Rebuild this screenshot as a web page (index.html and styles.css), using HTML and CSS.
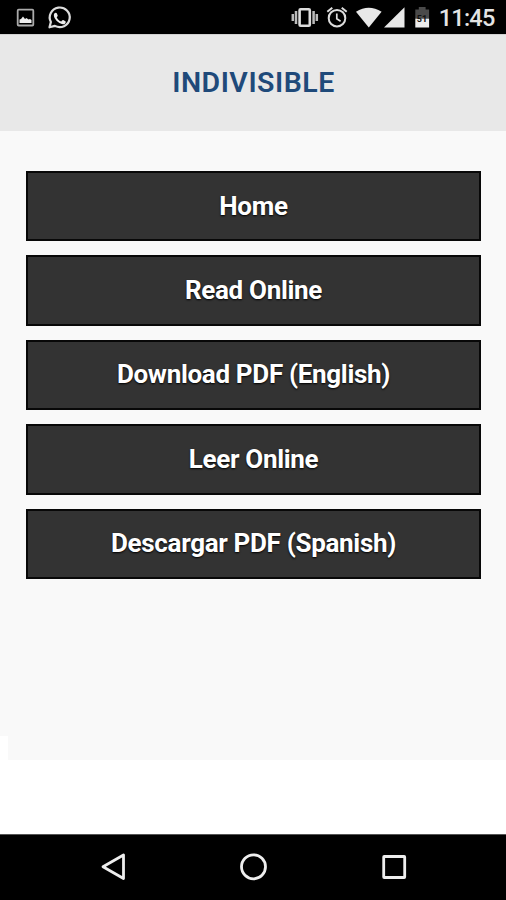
FILE: index.html
```html
<!DOCTYPE html>
<html lang="en">
<head>
  <meta charset="UTF-8" />
  <meta name="viewport" content="width=device-width, initial-scale=1" />
  <title>Indivisible</title>
  <link rel="stylesheet" href="styles.css">
</head>
<body>
  <!-- Status Bar -->
  <div class="status-bar">
    <svg width="506" height="34" viewBox="0 0 506 34">
      <!-- picture -->
      <rect x="17.7" y="9.7" width="15.6" height="15.8" rx="1" fill="none" stroke="#aaa" stroke-width="1.8" />
      <path d="M19.5 23v-3.5l1.5-.5 2-2.5 2 2.5 1.5-1 2 1.5 1.5-.5 1.5 1V23z" fill="#eee" />
      <!-- whatsapp -->
      <path d="M49.5 27.3l1.4-5.4a10 9.8 0 1 1 4 4z" fill="none" stroke="#ddd" stroke-width="2.2" stroke-linejoin="round" />
      <path d="M54.3 13.5c.9-1.3 2.2-1 2.6 0l.8 2c.2.7-.8 1.5-1 1.9 1 2 2.5 3.3 4.6 4.1.5-.3 1.2-1.7 1.9-1.4l2.2 1.2c.8.5.3 1.9-.8 2.6-1.5.9-4.2.1-6.5-1.8-2.7-2.2-5.3-6-3.8-8.6z" fill="#eee" />
      <!-- vibrate -->
      <rect x="299.6" y="9.2" width="10.2" height="16.6" rx="1" fill="none" stroke="#ddd" stroke-width="2.6" />
      <path d="M296 11v13M313.6 11v13M292.8 14v7M316.8 14v7" fill="none" stroke="#bbb" stroke-width="2.5" />
      <!-- alarm -->
      <circle cx="337" cy="18.2" r="8.3" fill="none" stroke="#ddd" stroke-width="2" />
      <path d="M327.3 11.8l5-4M346.7 11.8l-5-4" stroke="#ddd" stroke-width="2" />
      <path d="M336.8 13.5v5.3l3.8 2.4" fill="none" stroke="#ddd" stroke-width="1.7" />
      <!-- wifi -->
      <path d="M356 11.8Q368.7 3.6 381.6 11.8L368.8 27.5z" fill="#e8e8e8" />
      <!-- signal -->
      <path d="M404.5 7.2V27.5H384z" fill="#e8e8e8" />
      <!-- battery -->
      <path d="M415.3 18V9.5h3.5V7h6.8v2.5h3.5V18z" fill="#4a4a4a" />
      <path d="M415.3 18.5h13.8v9h-13.8z" fill="#eee" />
      <text class="battery-level" x="422" y="21.5">51</text>
      <text class="clock" x="438.8" y="26.3" textLength="56.5">11:45</text>
    </svg>
  </div>

  <header class="header">
    <h1>INDIVISIBLE</h1>
  </header>

  <main class="content">
    <nav class="menu">
      <a class="menu-button" href="#">Home</a>
      <a class="menu-button" href="#">Read Online</a>
      <a class="menu-button" href="#">Download PDF (English)</a>
      <a class="menu-button" href="#">Leer Online</a>
      <a class="menu-button" href="#">Descargar PDF (Spanish)</a>
    </nav>
  </main>
  <div class="content-end"></div>

  <!-- Navigation Bar -->
  <footer class="nav-bar">
    <svg width="506" height="65" viewBox="0 835 506 65">
      <path d="M123.5 855v23.5L103 866.7z" />
      <circle cx="253.5" cy="866.8" r="12" />
      <rect x="383.7" y="856.5" width="21" height="21" rx=".5" />
    </svg>
  </footer>
</body>
</html>
```

FILE: styles.css
```css
* {
  box-sizing: border-box;
}

body {
  margin: 0;
  min-height: 100vh;
  display: flex;
  flex-direction: column;
  font-family: Roboto, sans-serif;
  background: #fff;
}

svg {
  display: block;
}

.status-bar {
  height: 34px;
  background: #000;
}

.clock {
  font-size: 23.5px;
  font-weight: 500;
  fill: #e4e4e4;
}

.battery-level {
  font-size: 9px;
  font-weight: 700;
  text-anchor: middle;
  fill: #111;
}

.header {
  height: 97px;
  padding-bottom: 2px;
  display: flex;
  align-items: center;
  justify-content: center;
  background: #e8e8e8;
  border-top: 1px solid #d2d2d2;
}

.header h1 {
  margin: 0;
  padding-left: 1px;
  font-size: 28.5px;
  font-weight: 600;
  letter-spacing: 0.5px;
  color: #1f4a7a;
}

.content {
  height: 605px;
  padding: 40px 25px 0 26px;
  background: #f9f9f9;
}

.menu {
  display: flex;
  flex-direction: column;
  gap: 14px;
}

.menu-button {
  height: 70.4px;
  padding-bottom: 1px;
  display: flex;
  align-items: center;
  justify-content: center;
  background: #333;
  border: 2px solid #080808;
  color: #fff;
  font-size: 26px;
  font-weight: 700;
  letter-spacing: -0.32px;
  text-decoration: none;
  text-shadow: 0 1px 2px #000;
}

.content-end {
  height: 24px;
  margin-left: 8px;
  background: #f9f9f9;
}

.nav-bar {
  height: 66px;
  margin-top: auto;
  background: #000;
  border-top: 1px solid #555;
}

.nav-bar svg {
  fill: none;
  stroke: #eee;
  stroke-width: 2.8;
  stroke-linejoin: round;
}
```
